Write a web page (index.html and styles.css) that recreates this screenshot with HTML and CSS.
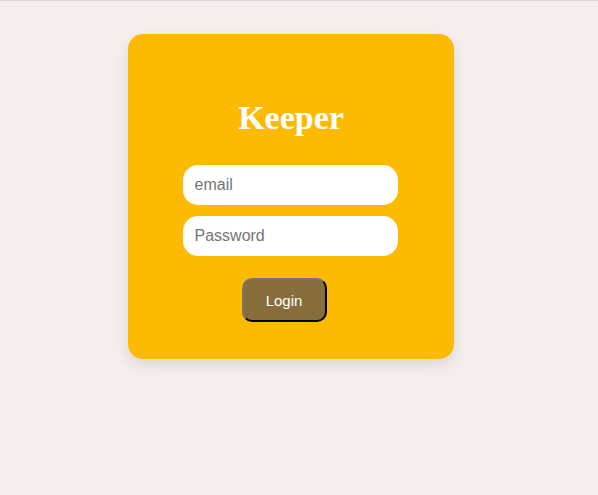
FILE: index.html
```html
<!DOCTYPE html>
<html>
<head>
<meta charset="utf-8">
<link rel="stylesheet" href="styles.css">
</head>
<body>
<div class="page">
  <div class="card">
    <h1 class="title">Keeper</h1>
    <form class="form">
      <input class="field" type="text" placeholder="email">
      <input class="field" type="password" placeholder="Password">
      <button class="btn" type="button">Login</button>
    </form>
  </div>
</div>
</body>
</html>
```
FILE: styles.css
```css
html, body {
  margin: 0;
  padding: 0;
  background: #f6eded;
  height: 100%;
}
.page {
  border-top: 1px solid #d9d5d9;
  padding-top: 33px;
  padding-left: 128px;
  box-sizing: border-box;
  height: 100%;
}
.card {
  width: 326px;
  height: 325px;
  box-sizing: border-box;
  background: #fdba02;
  border-radius: 15px;
  box-shadow: 0 6px 14px rgba(0, 0, 0, 0.1);
  padding-top: 64px;
  display: flex;
  flex-direction: column;
  align-items: center;
}
.title {
  margin: 0;
  font-family: "Liberation Serif", serif;
  font-weight: bold;
  font-size: 34px;
  line-height: 40px;
  color: #ffffff;
}
.form {
  margin-top: 27px;
  margin-right: 2px;
  display: flex;
  flex-direction: column;
  align-items: center;
}
.field {
  width: 215px;
  height: 40px;
  box-sizing: border-box;
  border: none;
  border-radius: 15px;
  background: #ffffff;
  padding: 0 12px;
  font-family: "Liberation Sans", Arial, sans-serif;
  font-size: 16px;
  color: #333;
  margin-bottom: 11px;
  outline: none;
}
.field::placeholder {
  color: #757575;
}
.btn {
  margin-top: 11px;
  margin-right: 12px;
  width: 85px;
  height: 44px;
  box-sizing: border-box;
  background: #886d3c;
  color: #ffffff;
  border: 2px outset #767676;
  border-color: #7a7470 #222 #222 #7a7470;
  border-radius: 10px;
  font-family: "Liberation Sans", Arial, sans-serif;
  font-size: 15px;
}
```
